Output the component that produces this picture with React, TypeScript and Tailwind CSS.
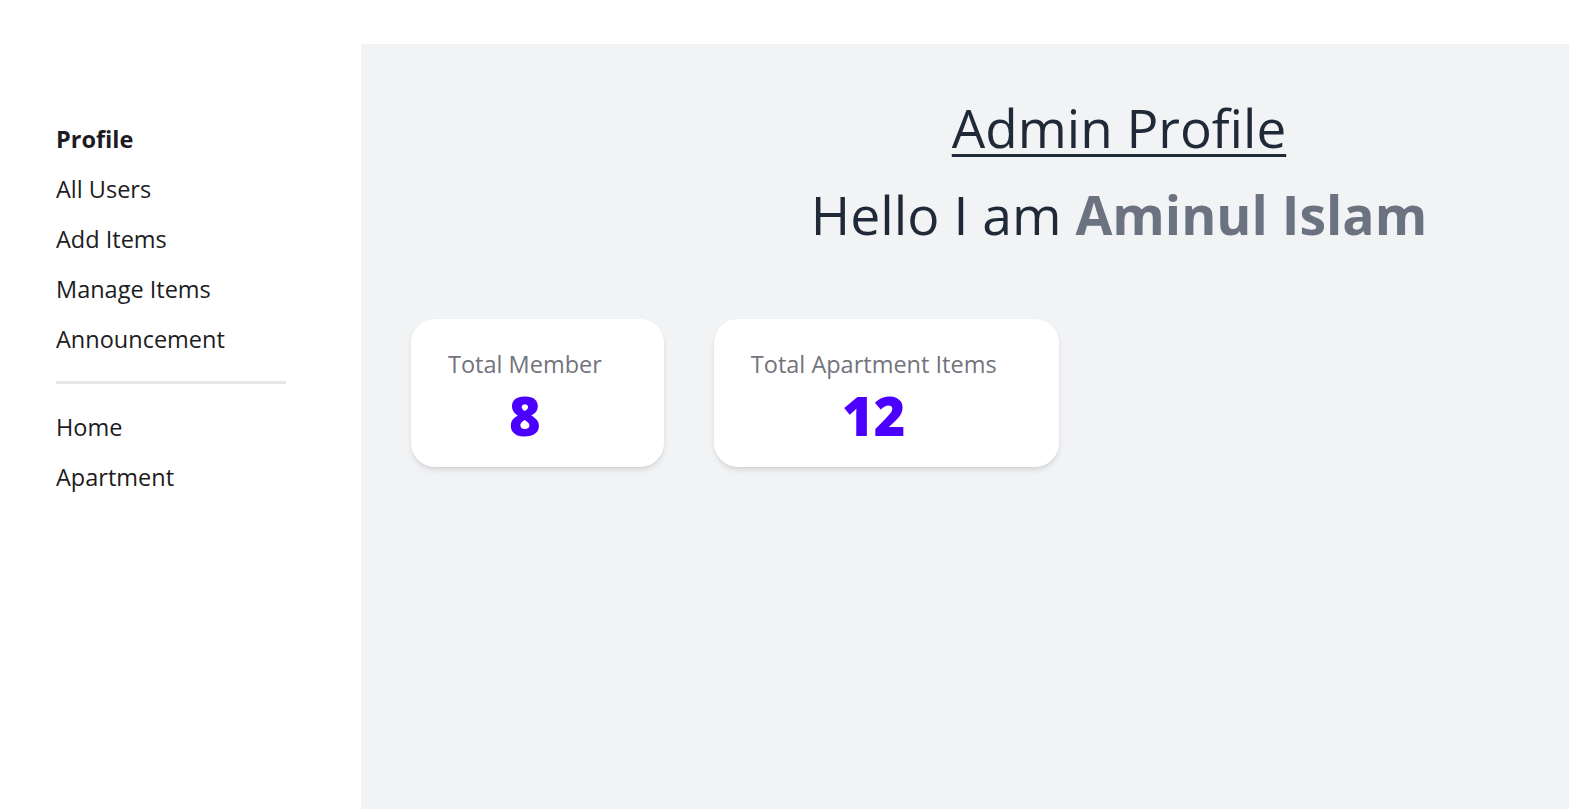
import React from "react";

const mainLinks = ["Profile", "All Users", "Add Items", "Manage Items", "Announcement"];
const siteLinks = ["Home", "Apartment"];

const stats = [
  { label: "Total Member", value: 8 },
  { label: "Total Apartment Items", value: 12 },
];

const App = () => {
  return (
    <div className="flex min-h-screen bg-white font-['Open_Sans',sans-serif]">
      {/* sidebar */}
      <aside className="w-[361px] shrink-0 pl-14 pt-[115px]">
        <ul>
          {mainLinks.map((link, i) => (
            <li
              key={link}
              className={`flex h-[50px] items-center text-[23.5px] text-[#1c1c22] ${i === 0 ? "font-bold" : ""}`}
            >
              {link}
            </li>
          ))}
        </ul>
        <div className="mt-4 h-[3px] w-[230px] bg-[#e7e7e7]" />
        <ul className="mt-[19px]">
          {siteLinks.map((link) => (
            <li key={link} className="flex h-[50px] items-center text-[23.5px] text-[#1c1c22]">
              {link}
            </li>
          ))}
        </ul>
      </aside>

      {/* content */}
      <main className="mt-11 flex-1 bg-[#f2f3f5]">
        <div className="pl-[308px] pt-[54px] text-center text-[#1f2937]">
          <h1 className="text-[53px] leading-[60px] underline decoration-[3px] underline-offset-[6px]">
            Admin Profile
          </h1>
          <h2 className="mt-[27px] text-[53.5px] leading-[60px]">
            Hello I am <span className="font-bold text-[#6b7280]">Aminul Islam</span>
          </h2>
        </div>

        <div className="ml-[50px] mt-[74px] flex gap-[50px]">
          {stats.map((s) => (
            <div
              key={s.label}
              className="h-[148px] rounded-[24px] bg-white pl-[37px] pr-[62px] pt-[29px] shadow-md"
            >
              <div className="flex flex-col items-center">
                <p className="text-[23.5px] leading-8 text-[#73737d]">{s.label}</p>
                <p className="mt-[9px] text-[54px] font-black leading-[52px] text-[#4b00ff]">
                  {s.value}
                </p>
              </div>
            </div>
          ))}
        </div>
      </main>
    </div>
  );
};

export default App;
